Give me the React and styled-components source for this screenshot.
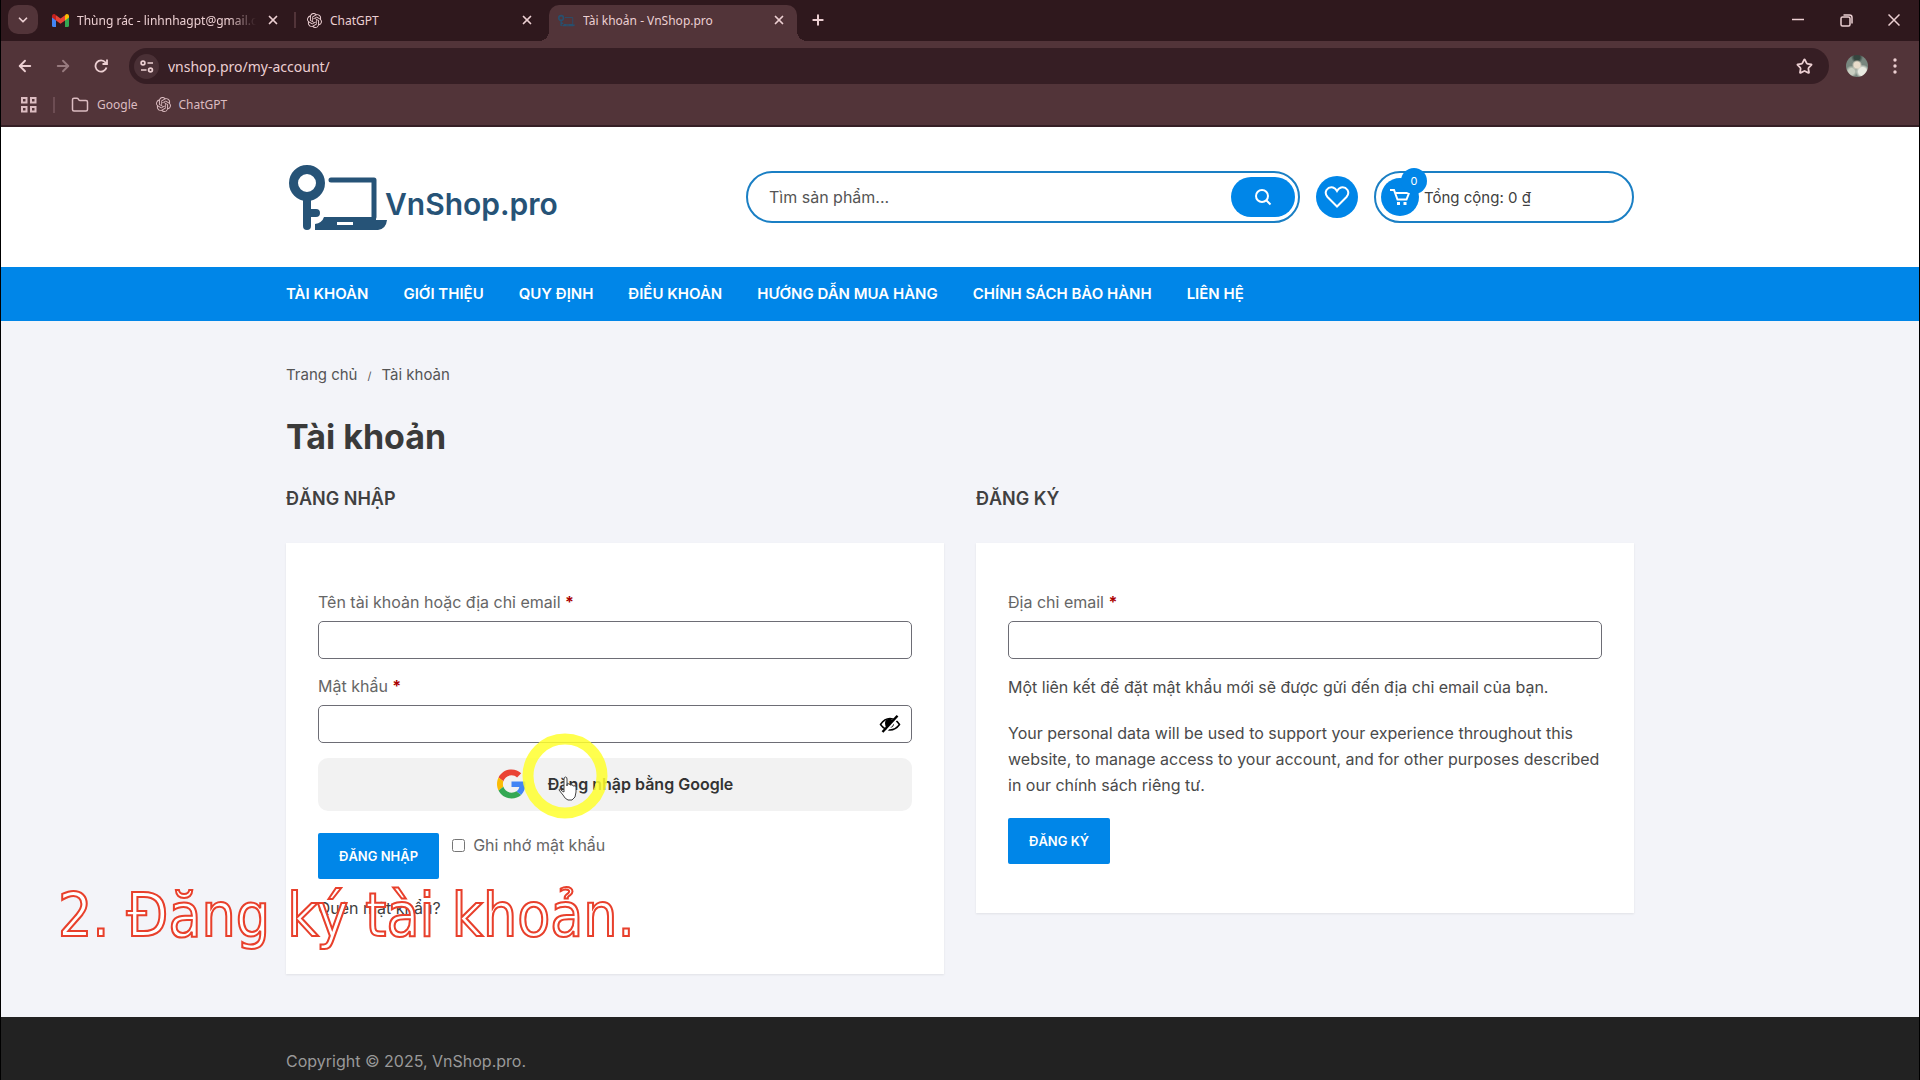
import React from "react";
import styled, { createGlobalStyle, css } from "styled-components";
import { SiOpenai } from "react-icons/si";
import { ArrowLeft, ArrowRight, ChevronDown, Folder, Plus, Star, X } from "lucide-react";

const uiFont = `"Noto Sans", "Open Sans", sans-serif`;
const siteFont = `Inter, "Liberation Sans", sans-serif`;

const bookmarks = [
    { name: "Google", icon: "folder" },
    { name: "ChatGPT", icon: "openai" },
];

const menu = [
    "Tài khoản",
    "Giới thiệu",
    "Quy định",
    "Điều khoản",
    "Hướng dẫn mua hàng",
    "Chính sách bảo hành",
    "Liên hệ",
];

function GmailIcon() {
    return (
        <svg width="17" height="13" viewBox="0 0 17 13">
            <path d="M0 2v9.500q0 1.500 1.500 1.500H4V4.500z" fill="#4285f4" />
            <path d="M17 2v9.500q0 1.500-1.500 1.500H13V4.500z" fill="#34a853" />
            <path d="M4 1.200v5.300L0 3.500V2Q.2.100 2 0q1 0 2 1.200z" fill="#c5221f" />
            <path d="M13 1.200v5.300l4-3V2Q16.800.100 15 0q-1 0-2 1.200z" fill="#fbbc04" />
            <path d="M4 1.200 8.500 4.600 13 1.200v5.300L8.500 9.800 4 6.500z" fill="#ea4335" />
        </svg>
    );
}

function ShopMark({ width, height, color }) {
    return (
        <svg width={width} height={height} viewBox="0 0 98 65">
            <circle cx="18" cy="18" r="13.500" fill="none" stroke={color} strokeWidth="9" />
            <path d="M18 33v28M18 48h9" stroke={color} strokeWidth="8" strokeLinecap="round" fill="none" />
            <path d="M42 15h43v37" stroke={color} strokeWidth="5" strokeLinecap="round" strokeLinejoin="round" fill="none" />
            <path
                fillRule="evenodd"
                d="M37 52h50v3h11q-1 9-9 10H26v-6q7-1 9-7zM48 57v3h16v-3z"
                fill={color}
            />
        </svg>
    );
}

function GoogleIcon() {
    return (
        <svg width="29" height="30" viewBox="0 0 48 48">
            <path fill="#ea4335" d="M24 9.500c3.540 0 6.710 1.220 9.210 3.600l6.850-6.850C35.900 2.380 30.470 0 24 0 14.620 0 6.510 5.380 2.560 13.220l7.980 6.190C12.430 13.720 17.740 9.500 24 9.500z" />
            <path fill="#4285f4" d="M46.980 24.550c0-1.570-.15-3.090-.38-4.550H24v9.020h12.940c-.58 2.960-2.260 5.480-4.780 7.180l7.730 6c4.510-4.180 7.090-10.360 7.090-17.650z" />
            <path fill="#fbbc05" d="M10.530 28.590c-.48-1.450-.76-2.990-.76-4.590s.27-3.140.76-4.590l-7.980-6.190C.92 16.460 0 20.120 0 24c0 3.880.92 7.540 2.560 10.780l7.970-6.190z" />
            <path fill="#34a853" d="M24 48c6.480 0 11.930-2.130 15.890-5.810l-7.730-6c-2.150 1.450-4.920 2.300-8.160 2.300-6.260 0-11.570-4.220-13.470-9.910l-7.980 6.190C6.510 42.620 14.620 48 24 48z" />
        </svg>
    );
}

function EyeIcon() {
    return (
        <svg width="22" height="18" viewBox="0 0 22 18">
            <path d="M1.500 9.500Q5.500 3.500 11 3.500t9.500 6q-4 5.500-9.500 5.500t-9.500-5.500z" fill="none" stroke="#000" strokeWidth="1.500" />
            <path d="M6 8q0-4 5-4.200L14 5 7.500 13Q6 11 6 8z" fill="#000" />
            <path d="M14.500 8.500q0 3-3.500 4" fill="none" stroke="#000" strokeWidth="1.200" />
            <path d="M20 1.500 6 17.500" stroke="#fff" strokeWidth="2" />
            <path d="M18.500.800 3.500 17" stroke="#000" strokeWidth="2.400" />
        </svg>
    );
}

function App() {
    return (
        <Window>
            <GlobalStyle />
            <TabStrip>
                <TabSearch type="button" aria-label="Search tabs"><ChevronDown size={14} strokeWidth={3} /></TabSearch>
                <Tab $width={257}>
                    <GmailIcon />
                    <TabTitle $fade>Thùng rác - linhnhagpt@gmail.com</TabTitle>
                    <TabClose type="button" aria-label="Close"><X size={14} strokeWidth={3} /></TabClose>
                </Tab>
                <Tab $width={254} $divided>
                    <SiOpenai size={15} />
                    <TabTitle>ChatGPT</TabTitle>
                    <TabClose type="button" aria-label="Close"><X size={14} strokeWidth={3} /></TabClose>
                </Tab>
                <Tab $width={248} $active>
                    <ShopMark width={17} height={13} color="#27506f" />
                    <TabTitle>Tài khoản - VnShop.pro</TabTitle>
                    <TabClose type="button" aria-label="Close"><X size={14} strokeWidth={3} /></TabClose>
                </Tab>
                <IconButton type="button" aria-label="New tab" $width={42}><Plus size={16} strokeWidth={3} /></IconButton>
                <WindowControls>
                    <IconButton type="button" aria-label="Minimize" $width={48}>
                        <svg width="12" height="12"><path d="M0 5.500h12" stroke="currentColor" strokeWidth="1.500" /></svg>
                    </IconButton>
                    <IconButton type="button" aria-label="Restore" $width={48}>
                        <svg width="13" height="13" fill="none" stroke="currentColor" strokeWidth="1.500">
                            <rect x="1" y="3" width="9" height="9" rx="1.500" />
                            <path d="M3.500 1h6q2.500 0 2.500 2.500v6" />
                        </svg>
                    </IconButton>
                    <IconButton type="button" aria-label="Close window" $width={48}>
                        <svg width="12" height="12"><path d="M.5.500l11 11M11.500.500l-11 11" stroke="currentColor" strokeWidth="1.500" /></svg>
                    </IconButton>
                </WindowControls>
            </TabStrip>

            <Toolbar>
                <IconButton type="button" aria-label="Back" $width={38}><ArrowLeft size={18} strokeWidth={2.500} /></IconButton>
                <IconButton type="button" aria-label="Forward" $width={38} $dim><ArrowRight size={18} strokeWidth={2.500} /></IconButton>
                <IconButton type="button" aria-label="Reload" $width={38}>
                    <svg width="14" height="14" fill="none" stroke="currentColor" strokeWidth="1.800">
                        <path d="M12.500 8.500A5.600 5.600 0 1 1 11.500 3.500L13 5M13 .5V5H8.500" />
                    </svg>
                </IconButton>
                <AddressBar>
                    <SiteInfo type="button" aria-label="Site information">
                        <svg width="14" height="13" fill="none" stroke="currentColor" strokeWidth="1.700">
                            <circle cx="3" cy="3" r="1.900" />
                            <path d="M7.500 3H13M1 10h5.500" />
                            <circle cx="10.500" cy="10" r="1.900" />
                        </svg>
                    </SiteInfo>
                    <AddressInput aria-label="Address" defaultValue="vnshop.pro/my-account/" />
                    <IconButton type="button" aria-label="Bookmark" $width={32}><Star size={17} strokeWidth={2.500} /></IconButton>
                </AddressBar>
                <Avatar type="button" aria-label="Profile" />
                <IconButton type="button" aria-label="Menu" $width={24}>
                    <svg width="4" height="16" fill="currentColor">
                        <circle cx="2" cy="2" r="1.700" />
                        <circle cx="2" cy="8" r="1.700" />
                        <circle cx="2" cy="14" r="1.700" />
                    </svg>
                </IconButton>
            </Toolbar>

            <BookmarkBar>
                <svg width="16" height="16" fill="none" stroke="currentColor" strokeWidth="2">
                    <rect x="1" y="1" width="4.500" height="4.500" />
                    <rect x="10" y="1" width="4.500" height="4.500" />
                    <rect x="1" y="10" width="4.500" height="4.500" />
                    <rect x="10" y="10" width="4.500" height="4.500" />
                </svg>
                <BarDivider />
                {bookmarks.map((item) => (
                    <Bookmark href="#" key={item.name}>
                        {item.icon === "folder" ? <Folder size={18} /> : <SiOpenai size={15} />}
                        {item.name}
                    </Bookmark>
                ))}
            </BookmarkBar>

            <Header>
                <HeaderInner>
                    <Logo href="#">
                        <ShopMark width={98} height={65} color="#265377" />
                        <LogoName>VnShop.pro</LogoName>
                    </Logo>
                    <SearchForm>
                        <SearchInput type="search" placeholder="Tìm sản phẩm..." aria-label="Tìm sản phẩm" />
                        <SearchButton type="submit" aria-label="Tìm kiếm">
                            <svg width="18" height="18" fill="none" stroke="currentColor" strokeWidth="2">
                                <circle cx="8" cy="8" r="6" />
                                <path d="M12.500 12.500 16.500 16.500" />
                            </svg>
                        </SearchButton>
                    </SearchForm>
                    <Wishlist href="#" aria-label="Yêu thích">
                        <svg width="26" height="24" fill="none" stroke="currentColor" strokeWidth="2">
                            <path d="M13 21.500 3.500 12Q.5 8.500 2.500 5 5 1.500 9 2.500q2.500.800 4 3.500 1.500-2.700 4-3.500 4-1 6.500 2.500 2 3.500-1 7z" />
                        </svg>
                    </Wishlist>
                    <Cart href="#">
                        <CartIcon>
                            <svg width="20" height="18" fill="none" stroke="currentColor" strokeWidth="2">
                                <path d="M0 2h4l3.500 9.500h9L19 5H6" />
                                <path d="M7 15.500h3M13.500 15.500h3" strokeWidth="3" />
                            </svg>
                            <CartCount>0</CartCount>
                        </CartIcon>
                        Tổng cộng: 0 ₫
                    </Cart>
                </HeaderInner>
            </Header>

            <Nav>
                <NavInner>
                    {menu.map((item) => <NavLink href="#" key={item}>{item}</NavLink>)}
                </NavInner>
            </Nav>

            <Main>
                <Breadcrumb>
                    <a href="#">Trang chủ</a>
                    <small>/</small>
                    <span>Tài khoản</span>
                </Breadcrumb>
                <Title>Tài khoản</Title>
                <Columns>
                    <section>
                        <Subtitle>Đăng nhập</Subtitle>
                        <Card>
                            <Field>
                                <Label htmlFor="username">Tên tài khoản hoặc địa chỉ email <b>*</b></Label>
                                <Input id="username" type="text" />
                            </Field>
                            <Field>
                                <Label htmlFor="password">Mật khẩu <b>*</b></Label>
                                <PasswordBox>
                                    <Input id="password" type="password" />
                                    <EyeButton type="button" aria-label="Hiện mật khẩu"><EyeIcon /></EyeButton>
                                </PasswordBox>
                            </Field>
                            <GoogleButton type="button">
                                <GoogleIcon />
                                Đăng nhập bằng Google
                                <Pointer viewBox="0 0 86 86">
                                    <circle cx="43" cy="43" r="37" fill="none" stroke="#ffff2e" strokeOpacity=".85" strokeWidth="11" />
                                    <path
                                        d="M42 59V46q0-2 1.500-2t1.500 2v7-2q3-1 3 1 3-1 3 1 3-1 3 1v5q0 6-4 8h-4q-3-1-5-5l-4-5q0-2 3 1z"
                                        fill="#fff"
                                        stroke="#444"
                                    />
                                </Pointer>
                            </GoogleButton>
                            <LoginRow>
                                <Button type="submit">Đăng nhập</Button>
                                <Remember><input type="checkbox" />Ghi nhớ mật khẩu</Remember>
                            </LoginRow>
                            <LostLink href="#">Quên mật khẩu?</LostLink>
                        </Card>
                    </section>
                    <section>
                        <Subtitle>Đăng ký</Subtitle>
                        <Card>
                            <Field>
                                <Label htmlFor="reg-email">Địa chỉ email <b>*</b></Label>
                                <Input id="reg-email" type="email" />
                            </Field>
                            <Text>Một liên kết để đặt mật khẩu mới sẽ được gửi đến địa chỉ email của bạn.</Text>
                            <Text>
                                Your personal data will be used to support your experience throughout this website, to
                                manage access to your account, and for other purposes described in our{" "}
                                <a href="#">chính sách riêng tư</a>.
                            </Text>
                            <Button type="submit">Đăng ký</Button>
                        </Card>
                    </section>
                </Columns>
            </Main>

            <Footer>
                <FooterInner>Copyright © 2025, VnShop.pro.</FooterInner>
            </Footer>

            <Caption>2. Đăng ký tài khoản.</Caption>
        </Window>
    );
}

const GlobalStyle = createGlobalStyle`
  * { box-sizing: border-box; }
  body { margin: 0; background: #000; }
  a { color: inherit; text-decoration: none; }
  button, input { font: inherit; color: inherit; }
  button { padding: 0; border: 0; background: none; cursor: pointer; }
  svg { flex: none; }
`

const Window = styled.div`
  position: relative;
  display: flex;
  flex-direction: column;
  height: 100vh;
  overflow: hidden;
  padding: 0 1px;
  color: #404040;
  font-family: ${siteFont};
  font-size: 16px;
`

/* browser chrome */
const TabStrip = styled.div`
  display: flex;
  flex: none;
  height: 41px;
  padding: 5px 1px 0 7px;
  background: #2f181d;
  color: #eccfd2;
  font-family: ${uiFont};
  font-size: 12px;
`

const TabSearch = styled.button`
  display: grid;
  place-items: center;
  width: 30px;
  height: 29px;
  border-radius: 10px;
  background: #523439;
`

const Tab = styled.div`
  position: relative;
  display: flex;
  align-items: center;
  gap: 8px;
  width: ${(p) => p.$width}px;
  padding: 0 13px 6px 14px;
  height: 36px;
  ${(p) => p.$divided && css`
    padding-left: 12px;
    &::before {
      content: "";
      position: absolute;
      left: -1px;
      top: 7px;
      width: 2px;
      height: 16px;
      background: #523439;
    }
  `}
  ${(p) => p.$active && css`
    padding: 0 9px 6px;
    border-radius: 10px 10px 0 0;
    background: #523439;
    &::before, &::after {
      content: "";
      position: absolute;
      bottom: 0;
      width: 10px;
      height: 10px;
      background: radial-gradient(circle at 0 0, transparent 10px, #523439 10px);
    }
    &::before { left: -10px; }
    &::after { right: -10px; transform: scaleX(-1); }
  `}
`

const TabTitle = styled.span`
  flex: 1;
  min-width: 0;
  overflow: hidden;
  white-space: nowrap;
  ${(p) => p.$fade && css`
    mask-image: linear-gradient(90deg, #000 85%, transparent);
  `}
`

const TabClose = styled.button`
  display: grid;
  place-items: center;
  width: 18px;
  height: 18px;
`

const IconButton = styled.button`
  display: grid;
  place-items: center;
  width: ${(p) => p.$width}px;
  height: 30px;
  flex: none;
  opacity: ${(p) => (p.$dim ? 0.45 : 1)};
`

const WindowControls = styled.div`
  display: flex;
  margin-left: auto;
`

const Toolbar = styled.div`
  display: flex;
  flex: none;
  align-items: center;
  height: 49px;
  padding: 1px 12px 0 5px;
  background: #523439;
  color: #eccfd2;
  font-family: ${uiFont};
`

const AddressBar = styled.div`
  display: flex;
  flex: 1;
  align-items: center;
  gap: 9px;
  height: 36px;
  margin: 0 17px 0 9px;
  padding: 0 9px 0 5px;
  border-radius: 18px;
  background: #361e24;
`

const SiteInfo = styled.button`
  display: grid;
  place-items: center;
  width: 25px;
  height: 25px;
  border-radius: 50%;
  background: #4a3036;
`

const AddressInput = styled.input`
  flex: 1;
  min-width: 0;
  padding: 0;
  border: 0;
  background: none;
  font-size: 14px;
  outline: 0;
`

const Avatar = styled.button`
  width: 22px;
  height: 22px;
  margin-right: 15px;
  border-radius: 50%;
  background:
    radial-gradient(circle at 50% 45%, #e8dccb 0 3px, transparent 5px),
    radial-gradient(circle at 75% 75%, #e9ebe2 0 4px, transparent 7px),
    radial-gradient(circle at 25% 75%, #c9cfc2 0 3px, transparent 6px),
    radial-gradient(circle at 50% 10%, #35453f 0 3px, transparent 6px),
    #78877f;
`

const BookmarkBar = styled.div`
  display: flex;
  flex: none;
  align-items: center;
  gap: 16px;
  height: 37px;
  padding: 0 20px 6px;
  border-bottom: 2px solid #351f25;
  background: #523439;
  color: #dcbcc1;
  font-family: ${uiFont};
  font-size: 12px;
`

const BarDivider = styled.span`
  width: 2px;
  height: 16px;
  background: #6d4d53;
`

const Bookmark = styled.a`
  display: flex;
  align-items: center;
  gap: 8px;
  padding-right: 2px;
`

/* shop page */
const Header = styled.header`
  flex: none;
  background: #fff;
`

const container = css`
  width: 100%;
  max-width: 1348px;
  margin: 0 auto;
`

const HeaderInner = styled.div`
  ${container}
  display: flex;
  align-items: center;
  gap: 16px;
  height: 140px;
`

const Logo = styled.a`
  display: flex;
  align-items: center;
  margin-right: auto;
  padding-left: 3px;
  color: #265377;
  font-size: 30px;
  font-weight: 600;
`

const LogoName = styled.span`
  margin-left: -2px;
  padding-top: 14px;
`

const SearchForm = styled.form`
  display: flex;
  align-items: center;
  width: 554px;
  height: 52px;
  padding: 0 3px 0 21px;
  border: 2px solid #1a7fc4;
  border-radius: 26px;
`

const SearchInput = styled.input`
  flex: 1;
  min-width: 0;
  padding: 0;
  border: 0;
  outline: 0;
  &::placeholder { color: #555; opacity: 1; }
`

const SearchButton = styled.button`
  display: grid;
  place-items: center;
  width: 64px;
  height: 40px;
  border-radius: 20px;
  background: #0086e8;
  color: #fff;
`

const Wishlist = styled.a`
  display: grid;
  place-items: center;
  width: 42px;
  height: 42px;
  border-radius: 50%;
  background: #0086e8;
  color: #fff;
`

const Cart = styled.a`
  display: flex;
  align-items: center;
  gap: 5px;
  width: 260px;
  height: 52px;
  padding-left: 5px;
  border: 2px solid #1a7fc4;
  border-radius: 26px;
  font-size: 15px;
`

const CartIcon = styled.span`
  position: relative;
  display: grid;
  place-items: center;
  width: 38px;
  height: 38px;
  border-radius: 50%;
  background: #0086e8;
  color: #fff;
`

const CartCount = styled.span`
  position: absolute;
  top: -10px;
  right: -8px;
  display: grid;
  place-items: center;
  width: 26px;
  height: 26px;
  border-radius: 50%;
  background: #0086e8;
  font-size: 11px;
`

const Nav = styled.nav`
  flex: none;
  background: #0086e8;
`

const NavInner = styled.div`
  ${container}
  display: flex;
  align-items: center;
  gap: 35px;
  height: 54px;
  padding-bottom: 2px;
`

const NavLink = styled.a`
  color: #fff;
  font-size: 15px;
  font-weight: 600;
  text-transform: uppercase;
`

const Main = styled.main`
  flex: none;
  padding: 42px 0 43px;
  background: #f3f4f9;
`

const Breadcrumb = styled.div`
  ${container}
  display: flex;
  align-items: baseline;
  gap: 10px;
  color: #555;
  font-size: 15px;
  line-height: 24px;
  small { font-size: 11px; }
`

const Title = styled.h1`
  ${container}
  margin: 27px auto 24px;
  color: #3a3a3a;
  font-size: 34px;
  font-weight: 700;
  line-height: 44px;
`

const Columns = styled.div`
  ${container}
  display: grid;
  grid-template-columns: 1fr 1fr;
  align-items: start;
  gap: 32px;
`

const Subtitle = styled.h2`
  margin: 0 0 28px;
  font-size: 18px;
  font-weight: 600;
  line-height: 32px;
  text-transform: uppercase;
`

const Card = styled.div`
  padding: 47px 32px 49px;
  background: #fff;
  box-shadow: 0 1px 2px rgba(0, 0, 0, 0.08);
`

const Field = styled.div`
  margin-bottom: 15px;
`

const Label = styled.label`
  display: block;
  margin-bottom: 6px;
  color: #666;
  line-height: 25px;
  b { color: #a00; }
`

const Input = styled.input`
  display: block;
  width: 100%;
  height: 38px;
  padding: 0 10px;
  border: 1px solid #6d6d75;
  border-radius: 5px;
  background: #fff;
`

const PasswordBox = styled.div`
  position: relative;
`

const EyeButton = styled.button`
  position: absolute;
  top: 10px;
  right: 11px;
  height: 18px;
`

const GoogleButton = styled.button`
  position: relative;
  display: flex;
  align-items: center;
  justify-content: center;
  gap: 22px;
  width: 100%;
  height: 53px;
  padding-bottom: 2px;
  border-radius: 10px;
  background: #f2f2f2;
  color: #333;
  font-weight: 600;
`

const Pointer = styled.svg`
  position: absolute;
  left: 204px;
  top: -25px;
  width: 86px;
  height: 86px;
`

const LoginRow = styled.div`
  display: flex;
  gap: 13px;
  margin-top: 22px;
`

const Button = styled.button`
  height: 46px;
  padding: 0 21px;
  border-radius: 2px;
  background: #0086e8;
  color: #fff;
  font-size: 13px;
  font-weight: 600;
  text-transform: uppercase;
`

const Remember = styled.label`
  display: flex;
  align-items: center;
  gap: 8px;
  height: 24px;
  color: #666;
  input { width: 13px; height: 13px; margin: 0; }
`

const LostLink = styled.a`
  display: block;
  margin-top: 16px;
  margin-bottom: 4px;
  line-height: 26px;
`

const Text = styled.p`
  margin: 0 0 20px;
  color: #4a4a4a;
  line-height: 26px;
`

const Footer = styled.footer`
  flex: 1 0 auto;
  padding-top: 31px;
  background: #222;
  color: #999;
`

const FooterInner = styled.div`
  ${container}
  line-height: 26px;
`

/* subtitle laid over the page */
const Caption = styled.p`
  position: absolute;
  left: 58px;
  bottom: 122px;
  margin: 0;
  color: #fff;
  font-family: "DejaVu Sans Condensed", "DejaVu Sans", sans-serif;
  font-stretch: condensed;
  font-size: 60px;
  line-height: 86px;
  -webkit-text-stroke: 2px #e8402c;
`

export default App;
